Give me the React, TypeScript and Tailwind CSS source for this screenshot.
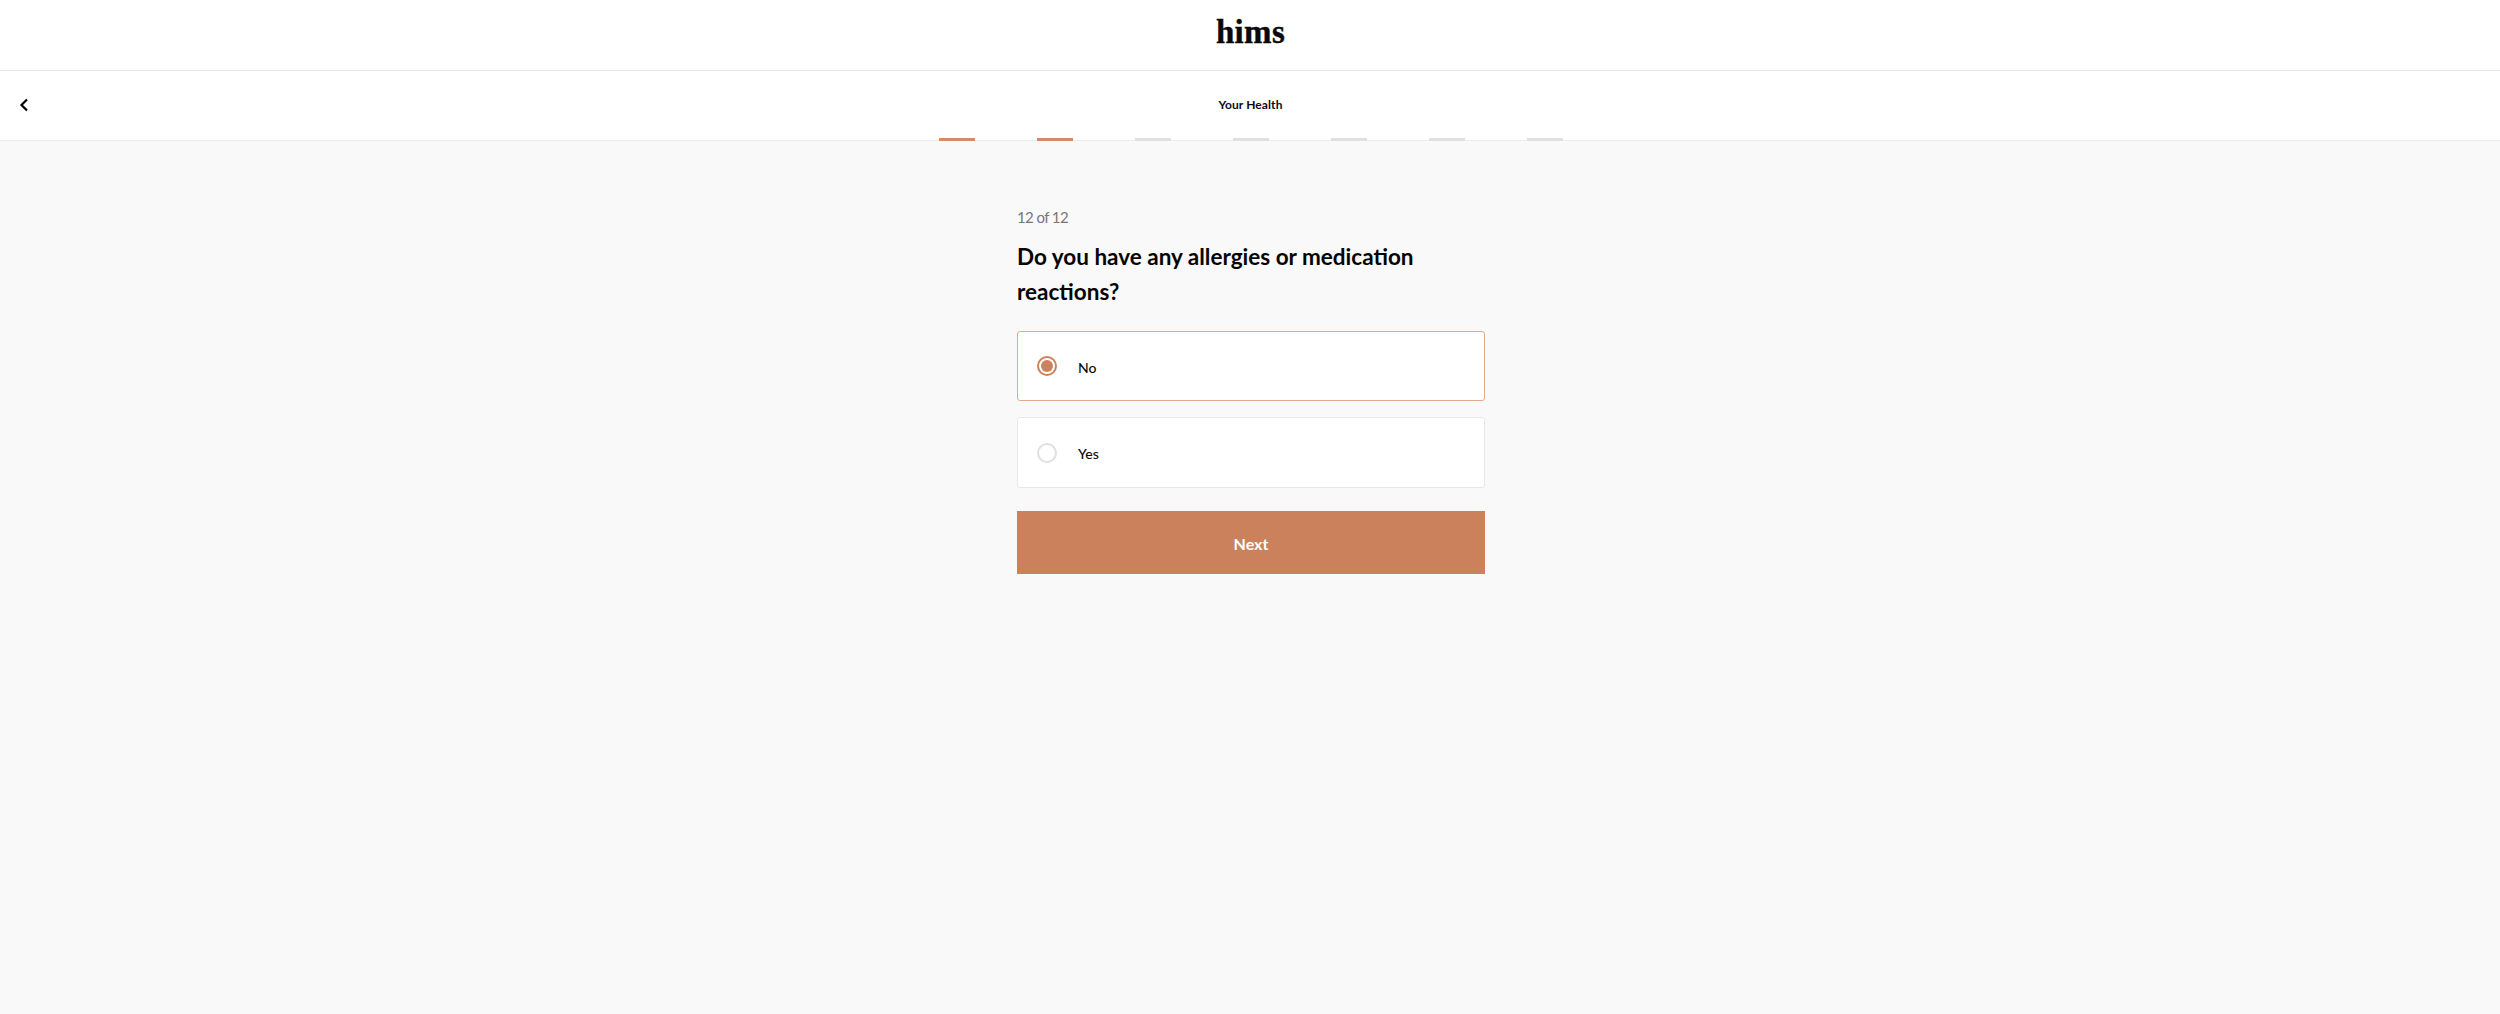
import React from "react";

const bars = [true, true, false, false, false, false, false];

export default function App() {
  return (
    <div className="min-h-[1014px] bg-[#f9f9f9] font-['Lato',sans-serif] text-black">
      <header className="flex h-[71px] items-center justify-center border-b border-[#e8e8e8] bg-white pl-[1px]">
        <span className="pb-[6px] font-['Liberation_Serif',serif] text-[33px] font-bold leading-none tracking-[0.3px] text-[#0a0a0a] [-webkit-text-stroke:0.4px_#0a0a0a]">hims</span>
      </header>
      <div className="relative flex h-[70px] items-center justify-center border-b border-[#ebebeb] bg-white pl-[1px]">
        <button className="absolute left-[17px] top-[25px] flex h-[18px] w-[14px] items-center justify-center">
          <svg width="10" height="14" viewBox="0 0 10 14" fill="none">
            <path d="M8 1.5 L2.5 7 L8 12.5" stroke="#000" strokeWidth="2.2" />
          </svg>
        </button>
        <span className="pb-[1px] text-[12px] font-bold tracking-[0.1px] text-[#0b0b14]">Your Health</span>
        <div className="absolute bottom-[-1px] left-0 right-0 flex justify-center gap-[62px] pl-[2px]">
          {bars.map((on, i) => (
            <div key={i} className={on ? "h-[3px] w-[36px] bg-[#d68a68]" : "h-[3px] w-[36px] bg-[#e0e0e0]"} />
          ))}
        </div>
      </div>
      <main className="mx-auto w-[470px] pl-[2px] pt-[64px]">
        <p className="text-[15px] leading-[24px] tracking-[-0.6px] text-[#777777]">12 of 12</p>
        <h1 className="mt-[10px] text-[22.5px] font-bold leading-[35px] text-[#050505]">
          Do you have any allergies or medication reactions?
        </h1>
        <div className="mt-[22px] flex h-[70px] items-center rounded-[3px] border border-[#e3a98c] bg-white pl-[19px]">
          <span className="flex h-[20px] w-[20px] items-center justify-center rounded-full border-2 border-[#cc825c]">
            <span className="h-[12px] w-[12px] rounded-full bg-[#cc825c]" />
          </span>
          <span className="ml-[21px] pt-[2px] text-[14px] font-medium text-[#0b0b14]">No</span>
        </div>
        <div className="mt-[16px] flex h-[71px] items-center rounded-[3px] border border-[#e8e8e8] bg-white pl-[19px]">
          <span className="h-[20px] w-[20px] rounded-full border-2 border-[#e0e0e0]" />
          <span className="ml-[21px] pt-[2px] text-[14px] font-medium text-[#0b0b14]">Yes</span>
        </div>
        <button className="mt-[23px] flex h-[63px] w-full items-center justify-center bg-[#cb825c] pt-[3px] text-[16px] font-bold text-white">
          Next
        </button>
      </main>
    </div>
  );
}
